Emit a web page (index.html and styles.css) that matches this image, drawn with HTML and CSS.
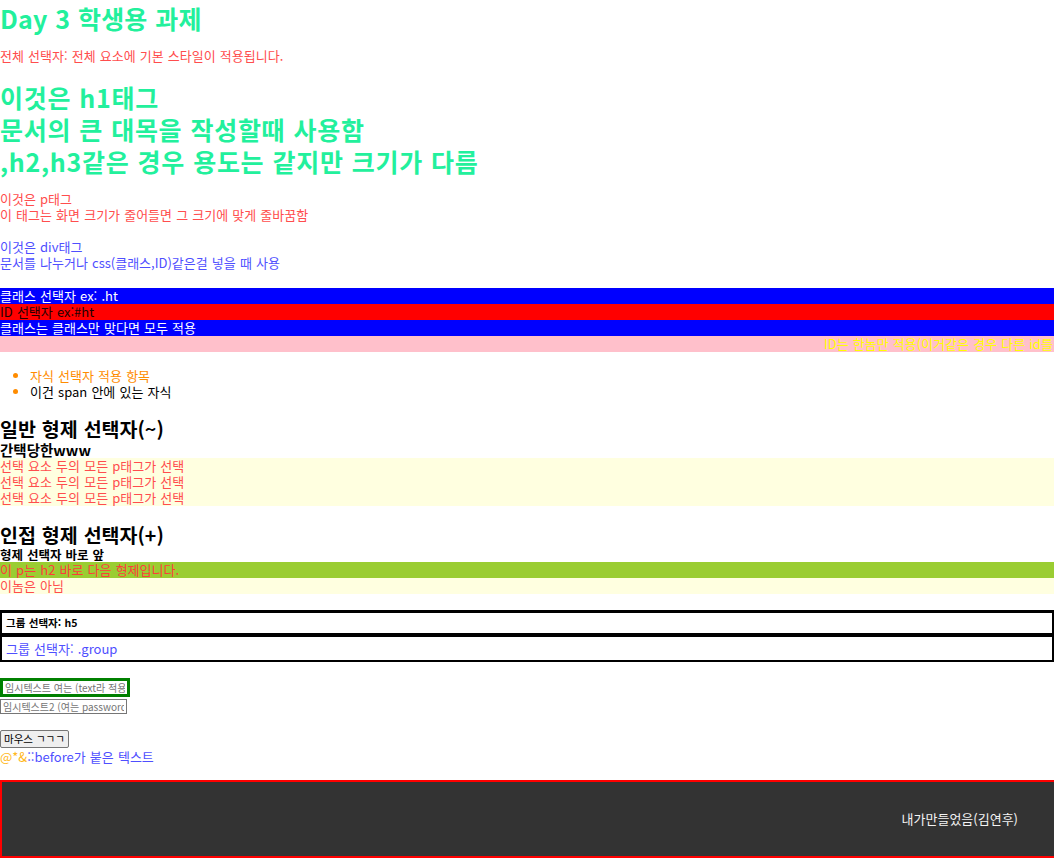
FILE: index.html
```html
<!DOCTYPE html>
<html lang="ko">
<head>
<meta charset="utf-8">
<title>Day 3 학생용 과제</title>
<link rel="stylesheet" href="styles.css">
</head>
<body>
<h1 class="title">Day 3 학생용 과제</h1>
<p class="all">전체 선택자: 전체 요소에 기본 스타일이 적용됩니다.</p>
<h1 class="big">이것은 h1태그<br>문서의 큰 대목을 작성할때 사용함<br>,h2,h3같은 경우 용도는 같지만 크기가 다름</h1>
<p class="para">이것은 p태그<br>이 태그는 화면 크기가 줄어들면 그 크기에 맞게 줄바꿈함</p>
<div class="divtext">이것은 div태그<br>문서를 나누거나 css(클래스,ID)같은걸 넣을 때 사용</div>
<div class="bars">
  <div class="bar bar-blue">클래스 선택자 ex: .ht</div>
  <div class="bar bar-red">ID 선택자 ex:#ht</div>
  <div class="bar bar-blue">클래스는 클래스만 맞다면 모두 적용</div>
  <div class="bar bar-pink"><span class="marquee">ID는 한놈만 적용(이거같은 경우 다른 id를 쓰면 적용되지 않음)</span></div>
</div>
<ul class="kids">
  <li>자식 선택자 적용 항목</li>
  <li><span class="plain">이건 span 안에 있는 자식</span></li>
</ul>
<h2 class="sub">일반 형제 선택자(~)</h2>
<h3 class="sub3">간택당한www</h3>
<p class="sib">선택 요소 두의 모든 p태그가 선택</p>
<p class="sib">선택 요소 두의 모든 p태그가 선택</p>
<p class="sib">선택 요소 두의 모든 p태그가 선택</p>
<h2 class="sub sub-gap">인접 형제 선택자(+)</h2>
<h4 class="sub4">형제 선택자 바로 앞</h4>
<p class="adj">이 p는 h2 바로 다음 형제입니다.</p>
<p class="sib">이놈은 아님</p>
<h5 class="group-h5">그룹 선택자: h5</h5>
<div class="group">그룹 선택자: .group</div>
<input class="in-text" type="text" placeholder="임시텍스트 여는 (text라 적용!)">
<input class="in-pass" type="password" placeholder="임시텍스트2 (여는 password라 적용)">
<button class="btn" type="button">마우스 ㄱㄱㄱ</button>
<p class="before-text">::before가 붙은 텍스트</p>
<footer class="footer"><span class="footer-text">내가만들었음(김연후)</span></footer>
</body>
</html>
```
FILE: styles.css
```css
html {
  overflow: hidden;
}
body {
  margin: 0;
  font-family: "Noto Sans CJK KR", "Noto Sans", sans-serif;
  font-size: 13px;
  line-height: 16px;
  word-spacing: 0.5px;
}
h1, h2, h3, h4, h5, p, ul {
  margin: 0;
}
.title {
  font-size: 25px;
  line-height: 36px;
  font-weight: 700;
  color: #22f09c;
  letter-spacing: 0.2px;
}
.all {
  margin-top: 12px;
  color: #ff4d4d;
}
.big {
  margin-top: 17px;
  font-size: 25px;
  line-height: 32px;
  font-weight: 700;
  color: #22f09c;
  letter-spacing: 0.7px;
}
.para {
  margin-top: 14px;
  color: #ff4d4d;
}
.divtext {
  margin-top: 16px;
  color: #4f4fff;
}
.bars {
  margin-top: 17px;
}
.bar {
  height: 16px;
  line-height: 16px;
  white-space: nowrap;
}
.bar-blue {
  background: #0000ff;
  color: #ffffff;
}
.bar-red {
  background: #ff0000;
  color: #220000;
}
.bar-pink {
  background: #ffc0cb;
  color: #ffff00;
  overflow-x: clip;
}
.marquee {
  display: inline-block;
  margin-left: 824px;
}
.kids {
  margin-top: 16px;
  padding-left: 30px;
  color: #ff8c00;
}
.plain {
  color: #000000;
}
.sub {
  margin-top: 17px;
  font-size: 19.5px;
  line-height: 24px;
  font-weight: 700;
  color: #000;
}
.sub3 {
  font-size: 14.5px;
  line-height: 17px;
  font-weight: 700;
  color: #000;
}
.sib {
  background: #ffffe0;
  color: #ff4d4d;
}
.sub-gap {
  margin-top: 17px;
}
.sub4 {
  font-size: 12.5px;
  line-height: 15px;
  font-weight: 700;
  color: #000;
}
.adj {
  background: #9acd32;
  color: #ff3b3b;
}
.group-h5 {
  margin-top: 16px;
  border: 2px solid #000;
  border-top-width: 3px;
  padding-left: 4px;
  height: 20px;
  line-height: 20px;
  font-size: 10.5px;
  font-weight: 700;
}
.group {
  border: 2px solid #000;
  padding-left: 4px;
  height: 23px;
  line-height: 23px;
  color: #4f4fff;
}
.in-text, .in-pass {
  display: block;
  box-sizing: border-box;
  padding: 0 2px;
  font-family: "Noto Sans CJK KR", "Noto Sans", sans-serif;
  font-size: 10px;
  background: #fff;
  outline: none;
}
.in-text::placeholder, .in-pass::placeholder {
  color: #757575;
}
.in-text {
  margin-top: 16px;
  width: 130px;
  height: 19px;
  border: 3px solid #008000;
}
.in-pass {
  margin-top: 2px;
  width: 127px;
  height: 15px;
  border: 1px solid #767676;
}
.btn {
  display: block;
  margin-top: 16px;
  box-sizing: border-box;
  width: 69px;
  height: 18px;
  padding: 0 3px;
  font-family: "Noto Sans CJK KR", "Noto Sans", sans-serif;
  font-size: 10.5px;
  line-height: 14px;
  color: #000;
  background: #efefef;
  border: 1px solid #767676;
  border-radius: 2px;
  text-align: left;
}
.before-text {
  margin-top: 1px;
  color: #4f4fff;
}
.before-text::before {
  content: "@*&";
  color: #ffb81c;
}
.footer {
  margin-top: 15px;
  display: flex;
  align-items: center;
  justify-content: flex-end;
  width: 100%;
  height: 74px;
  box-sizing: content-box;
  border: 2px solid #ff0000;
  background: #333333;
  color: #f4f4f4;
}
.footer-text {
  margin-right: 38px;
}
```
